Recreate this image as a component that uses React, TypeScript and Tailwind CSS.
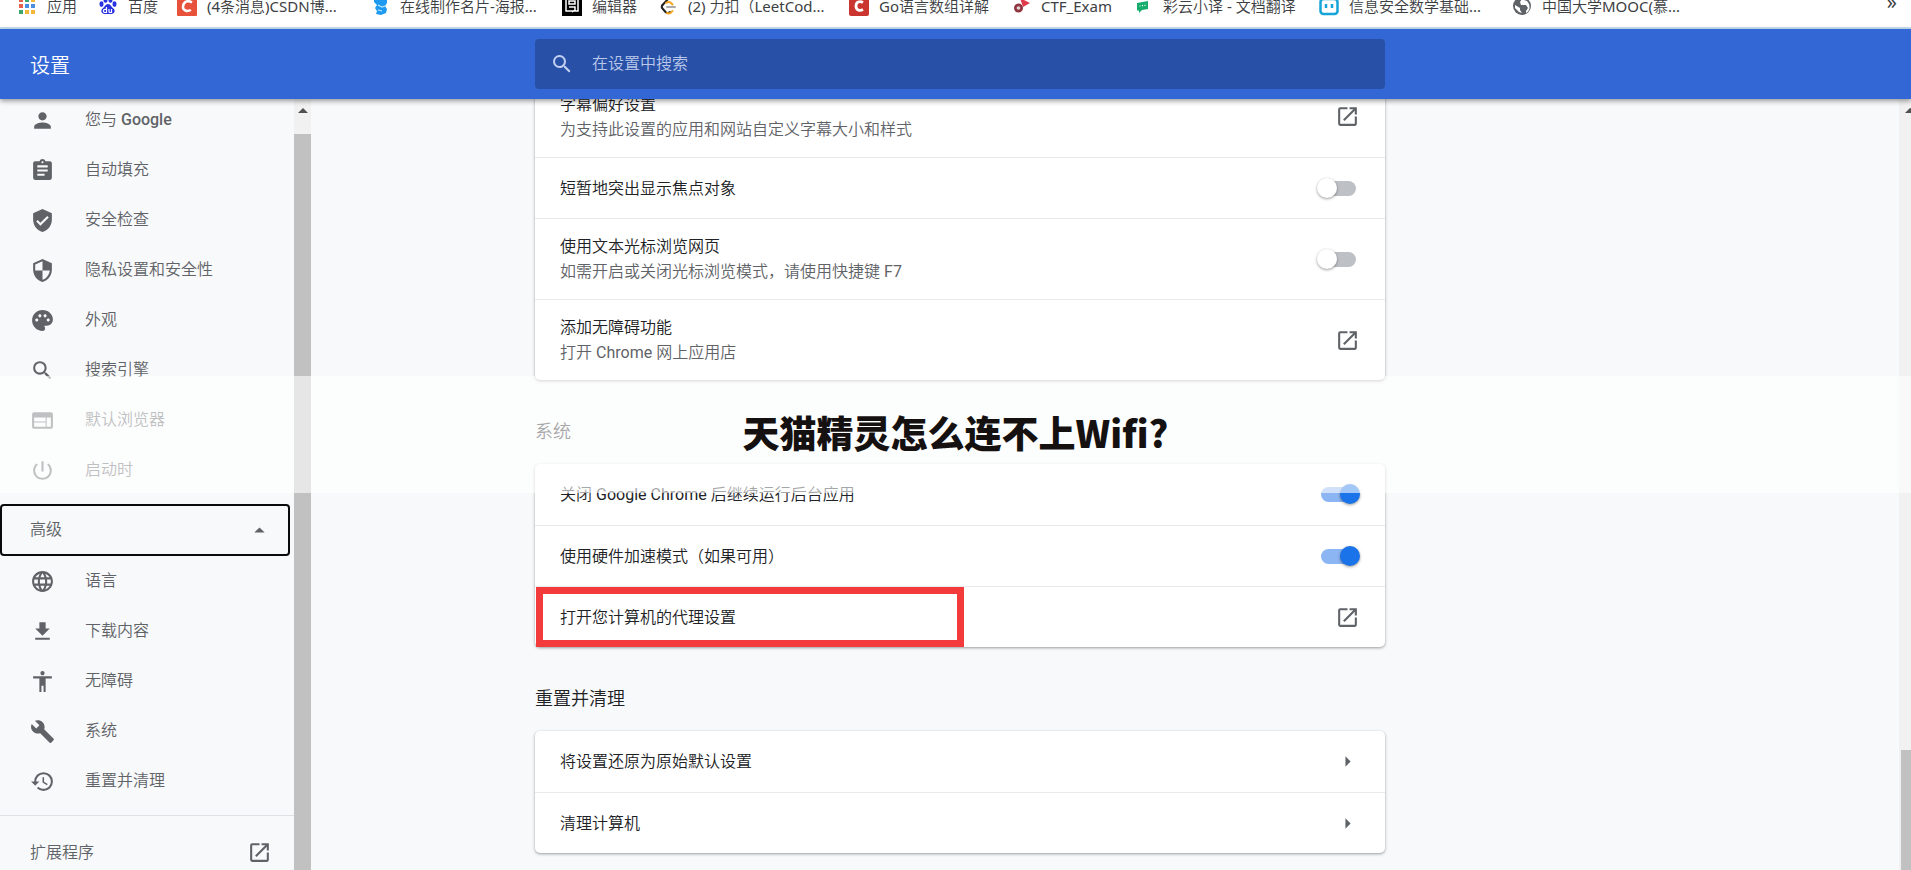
import type { ComponentType, ReactNode } from 'react';
import {
    MdAccessibility,
    MdArrowDropUp,
    MdArrowRight,
    MdAssignment,
    MdBuild,
    MdHistory,
    MdLanguage,
    MdOpenInNew,
    MdPalette,
    MdPerson,
    MdPowerSettingsNew,
    MdSearch,
    MdSecurity,
    MdVerifiedUser,
    MdWeb,
} from 'react-icons/md';

interface NavItem {
    label: ReactNode;
    icon: ComponentType<{ className?: string }>;
}

interface Bookmark {
    label: string;
    icon: ReactNode;
    width: string;
}

function DownloadIcon({ className }: { className?: string }) {
    return (
        <svg viewBox="0 0 24 24" fill="currentColor" className={className}>
            <path d="M19 9h-4V3H9v6H5l7 7 7-7zM5 18v2h14v-2H5z" />
        </svg>
    );
}

const basicItems: NavItem[] = [
    { label: <>您与 <span className="font-medium">Google</span></>, icon: MdPerson },
    { label: '自动填充', icon: MdAssignment },
    { label: '安全检查', icon: MdVerifiedUser },
    { label: '隐私设置和安全性', icon: MdSecurity },
    { label: '外观', icon: MdPalette },
    { label: '搜索引擎', icon: MdSearch },
    { label: '默认浏览器', icon: MdWeb },
    { label: '启动时', icon: MdPowerSettingsNew },
];

const advancedItems: NavItem[] = [
    { label: '语言', icon: MdLanguage },
    { label: '下载内容', icon: DownloadIcon },
    { label: '无障碍', icon: MdAccessibility },
    { label: '系统', icon: MdBuild },
    { label: '重置并清理', icon: MdHistory },
];

const bookmarks: Bookmark[] = [
    {
        label: '应用',
        width: 'w-[81px]',
        icon: (
            <svg viewBox="0 0 20 20" className="size-5">
                <path d="M2 2h4v4H2zM2 8h4v4H2z" fill="#e8604c" />
                <path d="M8 2h4v4H8zM2 14h4v4H2z" fill="#3fa66b" />
                <path d="M14 2h4v4h-4zM8 14h4v4H8zM14 14h4v4h-4z" fill="#f0b93a" />
                <path d="M8 8h4v4H8zM14 8h4v4h-4z" fill="#4a8fe0" />
            </svg>
        ),
    },
    {
        label: '百度',
        width: 'w-[79px]',
        icon: (
            <svg viewBox="0 0 20 20" className="size-5" fill="#2932e1">
                <ellipse cx="3.5" cy="8" rx="2" ry="2.8" />
                <ellipse cx="7.5" cy="4" rx="2" ry="2.8" />
                <ellipse cx="12.5" cy="4" rx="2" ry="2.8" />
                <ellipse cx="16.5" cy="8" rx="2" ry="2.8" />
                <path d="M10 8c2.500 0 3.500 3 5.500 4.600 2.200 1.800 1 5.400-2 5.400H6.500c-3 0-4.200-3.600-2-5.400C6.500 11 7.500 8 10 8z" />
                <path d="M8.500 11v5.500H7a1.500 1.500 0 0 1 0-3.200h1.500M11 13v2.500q0 1 1 1h1.500V13" fill="none" stroke="#fff" strokeWidth="1.200" />
            </svg>
        ),
    },
    {
        label: '(4条消息)CSDN博...',
        width: 'w-[193px]',
        icon: (
            <svg viewBox="0 0 20 20" className="size-5">
                <rect width="20" height="20" rx="1" fill="#e8523a" />
                <path d="M15 6.500C10.500 3.500 6.500 6 6 10.500c-.400 4 4 5.500 8 3.500" fill="none" stroke="#fff" strokeWidth="2.500" />
            </svg>
        ),
    },
    {
        label: '在线制作名片-海报...',
        width: 'w-[192px]',
        icon: (
            <svg viewBox="0 0 20 20" className="size-5">
                <path d="M4 1l4 2 9-1v5l-2 3 2 3-1 4-5 2-5-1 1-3-2-3 2-3-3-3z" fill="#1e9bf0" />
                <path d="M8 9l4 2 3-1M8 14l4 1" fill="none" stroke="#bfe4ff" strokeWidth="1.200" />
            </svg>
        ),
    },
    {
        label: '编辑器',
        width: 'w-[96px]',
        icon: (
            <svg viewBox="0 0 20 20" className="size-5">
                <rect width="20" height="20" fill="#000" />
                <path d="M4 2v13h12V2M7 5h6v3H7zM7 11h6v3l-3 2" fill="none" stroke="#fff" strokeWidth="1.500" />
            </svg>
        ),
    },
    {
        label: '(2) 力扣（LeetCod...',
        width: 'w-[191px]',
        icon: (
            <svg viewBox="0 0 20 20" className="size-5" fill="none" strokeWidth="2" strokeLinecap="round">
                <path d="M11 2L4.500 9" stroke="#222" />
                <path d="M4.500 9q-1.500 2 0 3.500l3 3.500q2 2 4.500 0" stroke="#222" />
                <path d="M8 7q3-2 5 0l1.500 1.500M9 17q3 1.500 5.500-2" stroke="#f5a623" />
                <path d="M9 11h8" stroke="#aaa" />
            </svg>
        ),
    },
    {
        label: 'Go语言数组详解',
        width: 'w-[162px]',
        icon: (
            <svg viewBox="0 0 20 20" className="size-5">
                <rect width="20" height="20" rx="2" fill="#ca3530" />
                <path d="M14 6.500C10.500 4.500 7 6 7 10s3.500 5.500 7 3.500" fill="none" stroke="#fff" strokeWidth="2.800" />
            </svg>
        ),
    },
    {
        label: 'CTF_Exam',
        width: 'w-[122px]',
        icon: (
            <svg viewBox="0 0 20 20" className="size-5">
                <circle cx="7.5" cy="12" r="4.500" fill="#8f3540" />
                <path d="M9 2l10 5-7 4z" fill="#e0394b" />
                <circle cx="7.500" cy="12" r="1.800" fill="#e5d4d6" />
            </svg>
        ),
    },
    {
        label: '彩云小译 - 文档翻译',
        width: 'w-[186px]',
        icon: (
            <svg viewBox="0 0 20 20" className="size-5">
                <path d="M4 7l11-2v8l-6 1-3 3v-2.500H4z" fill="#14ad6b" />
                <path d="M6.500 10h1M9 9.700h1M11.500 9.400h1" stroke="#fff" strokeWidth="1.200" />
            </svg>
        ),
    },
    {
        label: '信息安全数学基础...',
        width: 'w-[193px]',
        icon: (
            <svg viewBox="0 0 20 20" className="size-5">
                <rect x="1.500" y="3" width="17" height="15" rx="3" fill="#fff" stroke="#16a5d8" strokeWidth="2.500" />
                <path d="M7 8v4M13 8v4" stroke="#16a5d8" strokeWidth="2.500" />
            </svg>
        ),
    },
    {
        label: '中国大学MOOC(慕...',
        width: 'w-[200px]',
        icon: (
            <svg viewBox="0 0 20 20" className="size-5">
                <circle cx="10" cy="10" r="9" fill="#5f6368" />
                <path d="M10 3l-2 3 1 3h5l2 3-2 3v2c4-2 4-6 3-9l-2-3-3-1z" fill="#fff" />
                <path d="M3 9l5 3v2l2 3-3-1-4-4z" fill="#fff" />
            </svg>
        ),
    },
];

function BookmarksBar() {
    return (
        <nav className="flex h-[29px] shrink-0 items-start overflow-hidden border-b-2 border-[#c5dff0] bg-white pl-[17px] pr-3.5 font-['Noto_Sans','Noto_Sans_CJK_SC_DemiLight','Noto_Sans_CJK_SC',sans-serif] text-[15px] leading-5 text-[#3c4043]">
            <div className="-mt-1 flex grow">
                {bookmarks.map((b) => (
                    <a key={b.label} href="#" className={`flex shrink-0 items-center gap-2.5 whitespace-nowrap ${b.width}`}>
                        {b.icon}
                        {b.label}
                    </a>
                ))}
            </div>
            <button className="-mt-2 text-xl leading-5">»</button>
        </nav>
    );
}

function Header() {
    return (
        <header className="relative z-10 grid h-[70px] shrink-0 grid-cols-[28%_850px_1fr] items-center bg-[#3367d6] shadow-[0_2px_5px_rgba(0,0,0,0.4)]">
            <h1 className="pl-[30px] pt-1 text-xl text-white">设置</h1>
            <label className="flex h-[50px] items-center gap-[18px] rounded-sm bg-[#2850a7] pl-[15px] text-[#c3d1f0]">
                <MdSearch className="size-6" />
                <input
                    type="text"
                    placeholder="在设置中搜索"
                    aria-label="在设置中搜索"
                    className="grow bg-transparent outline-none placeholder:text-[#b9c8ea]"
                />
            </label>
        </header>
    );
}

function NavList({ items }: { items: NavItem[] }) {
    return (
        <ul>
            {items.map((item, i) => (
                <li key={i}>
                    <a href="#" className="flex h-[50px] items-center gap-[30px] pl-[30px]">
                        <item.icon className="size-[25px] shrink-0" />
                        <span>{item.label}</span>
                    </a>
                </li>
            ))}
        </ul>
    );
}

function Sidebar() {
    return (
        <aside className="flex w-[311px] overflow-hidden">
            <nav className="-mt-1 grow text-[#5f6368]">
                <NavList items={basicItems} />
                <button className="mt-[9px] flex h-[52px] w-[290px] items-center justify-between rounded-sm border-2 border-[#0b0b0b] pl-7 pr-4">
                    高级
                    <MdArrowDropUp className="size-[25px]" />
                </button>
                <NavList items={advancedItems} />
                <a href="#" className="mt-[9px] flex h-[74px] items-center justify-between border-t border-[#dfe1e5] pl-[30px] pr-[22px]">
                    扩展程序
                    <MdOpenInNew className="size-[25px]" />
                </a>
            </nav>
            <div className="flex w-[17px] shrink-0 flex-col items-center bg-[#f1f1f1]">
                <svg viewBox="0 0 10 6" className="mb-5 mt-2 h-[7px] w-[10px]" fill="#505050">
                    <path d="M0 5.500h10L5 .500z" />
                </svg>
                <div className="w-full grow bg-[#c1c1c1]" />
            </div>
        </aside>
    );
}

interface RowProps {
    label: string;
    detail?: string;
    highlighted?: boolean;
    children: ReactNode;
}

function Row({ label, detail, highlighted, children }: RowProps) {
    return (
        <label
            className={`relative flex items-center justify-between border-t border-[#e9eaec] pl-[25px] pr-[25px] first:border-t-0 ${detail ? 'h-[81px]' : 'h-[61px]'}`}
        >
            <span className="leading-[25px]">
                <span className="block text-[#202124]">{label}</span>
                {detail && <span className="block text-[#5f6368]">{detail}</span>}
            </span>
            {children}
            {highlighted && <span className="absolute inset-y-0 left-px w-[428px] border-[7px] border-[#f43b3b]" />}
        </label>
    );
}

function Toggle({ on = false }: { on?: boolean }) {
    return (
        <input
            type="checkbox"
            role="switch"
            defaultChecked={on}
            className="relative mr-1 h-[15px] w-[35px] appearance-none rounded-full bg-[#bdc1c6] before:absolute before:-left-1 before:-top-[3px] before:size-5 before:rounded-full before:bg-white before:shadow-[0_1px_3px_rgba(0,0,0,0.4)] checked:bg-[#8cb5f3] checked:before:left-[19px] checked:before:bg-[#1a73e8]"
        />
    );
}

function IconButton({ icon: Icon, label }: { icon: ComponentType<{ className?: string }>; label: string }) {
    return (
        <button aria-label={label} className="text-[#5f6368]">
            <Icon className="size-[25px]" />
        </button>
    );
}

function Card({ children }: { children: ReactNode }) {
    return (
        <div className="rounded-[5px] bg-white shadow-[0_1px_3px_rgba(60,64,67,0.5)]">{children}</div>
    );
}

function SectionTitle({ children }: { children: ReactNode }) {
    return <h2 className="flex h-[84px] items-center pt-5 text-lg text-[#202124]">{children}</h2>;
}

function SettingsContent() {
    return (
        <main className="-mt-[23px] w-[850px]">
            <Card>
                <Row label="字幕偏好设置" detail="为支持此设置的应用和网站自定义字幕大小和样式">
                    <IconButton icon={MdOpenInNew} label="字幕偏好设置" />
                </Row>
                <Row label="短暂地突出显示焦点对象">
                    <Toggle />
                </Row>
                <Row label="使用文本光标浏览网页" detail="如需开启或关闭光标浏览模式，请使用快捷键 F7">
                    <Toggle />
                </Row>
                <Row label="添加无障碍功能" detail="打开 Chrome 网上应用店">
                    <IconButton icon={MdOpenInNew} label="添加无障碍功能" />
                </Row>
            </Card>
            <SectionTitle>系统</SectionTitle>
            <Card>
                <Row label="关闭 Google Chrome 后继续运行后台应用">
                    <Toggle on />
                </Row>
                <Row label="使用硬件加速模式（如果可用）">
                    <Toggle on />
                </Row>
                <Row label="打开您计算机的代理设置" highlighted>
                    <IconButton icon={MdOpenInNew} label="打开您计算机的代理设置" />
                </Row>
            </Card>
            <SectionTitle>重置并清理</SectionTitle>
            <Card>
                <Row label="将设置还原为原始默认设置">
                    <IconButton icon={MdArrowRight} label="将设置还原为原始默认设置" />
                </Row>
                <Row label="清理计算机">
                    <IconButton icon={MdArrowRight} label="清理计算机" />
                </Row>
            </Card>
        </main>
    );
}

function PageScrollbar() {
    return (
        <div className="flex w-3 flex-col items-end justify-between justify-self-end bg-[#f1f1f1]">
            <svg viewBox="0 0 6 6" className="mt-2 h-[7px] w-[6px]" fill="#505050">
                <path d="M0 5.500h6V1L5 .500z" />
            </svg>
            <div className="h-[120px] w-2.5 bg-[#c1c1c1]" />
        </div>
    );
}

export default function App() {
    return (
        <div className="relative flex h-screen flex-col overflow-hidden bg-[#f8f9fa] font-[Roboto,'Noto_Sans_CJK_SC_DemiLight','Noto_Sans_CJK_SC',sans-serif] text-base">
            <BookmarksBar />
            <Header />
            <div className="grid min-h-0 grow grid-cols-[28%_850px_1fr]">
                <Sidebar />
                <SettingsContent />
                <PageScrollbar />
            </div>

            {/* Caption band */}
            <div className="pointer-events-none absolute inset-x-0 top-[376px] flex h-[117px] items-center justify-center bg-white/60 pb-1">
                <p className="font-['Noto_Sans_CJK_SC',sans-serif] text-[37px] font-black text-[#161111]">天猫精灵怎么连不上Wifi?</p>
            </div>
        </div>
    );
}
